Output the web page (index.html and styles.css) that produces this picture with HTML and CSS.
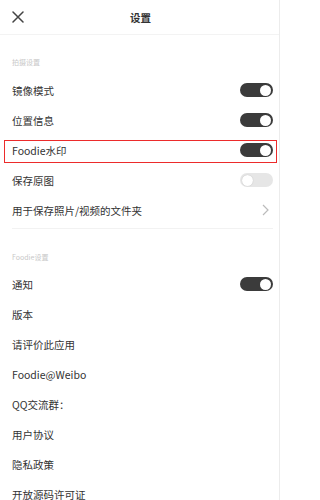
FILE: index.html
```html
<!DOCTYPE html>
<html lang="zh">
<head>
<meta charset="utf-8">
<link rel="stylesheet" href="styles.css">
</head>
<body>
<div class="page">
  <header class="topbar">
    <svg class="close" width="12" height="12" viewBox="0 0 12 12"><path d="M1 1L11 11M11 1L1 11" stroke="#444" stroke-width="1.5" fill="none" stroke-linecap="round"/></svg>
    <div class="title">设置</div>
  </header>

  <div class="section-label first">拍摄设置</div>
  <div class="row"><span>镜像模式</span><span class="toggle on"></span></div>
  <div class="row"><span>位置信息</span><span class="toggle on"></span></div>
  <div class="row marked"><span>Foodie水印</span><span class="toggle on"></span><span class="mark"></span></div>
  <div class="row"><span>保存原图</span><span class="toggle off"></span></div>
  <div class="row"><span>用于保存照片/视频的文件夹</span>
    <svg class="chev" width="7" height="12" viewBox="0 0 7 12"><path d="M1 1L6 6L1 11" stroke="#bbb" stroke-width="1.2" fill="none"/></svg>
  </div>
  <div class="divider"></div>

  <div class="section-label">Foodie设置</div>
  <div class="row"><span>通知</span><span class="toggle on"></span></div>
  <div class="row"><span>版本</span></div>
  <div class="row"><span>请评价此应用</span></div>
  <div class="row"><span>Foodie@Weibo</span></div>
  <div class="row"><span>QQ交流群：</span></div>
  <div class="row"><span>用户协议</span></div>
  <div class="row"><span>隐私政策</span></div>
  <div class="row"><span>开放源码许可证</span></div>
</div>
</body>
</html>
```

FILE: styles.css
```css
html, body {
  margin: 0;
  padding: 0;
  background: #fff;
}
body {
  width: 281px;
  height: 500px;
  overflow: hidden;
  font-family: "Noto Sans CJK SC", "Noto Sans", sans-serif;
  color: #333;
}
.page {
  width: 279px;
  height: 500px;
  border-right: 1px solid #ececec;
  overflow: hidden;
}
.topbar {
  position: relative;
  height: 34px;
  border-bottom: 1px solid #f3f3f3;
  display: flex;
  align-items: center;
  justify-content: center;
}
.close {
  position: absolute;
  left: 12px;
  top: 11px;
}
.title {
  font-size: 10.5px;
  font-weight: 700;
  color: #333;
  margin-left: 2px;
}
.section-label {
  font-size: 7px;
  line-height: 10px;
  color: #c8c8c8;
  padding: 0 12px;
  margin-top: 23px;
  margin-bottom: 7px;
}
.section-label.first {
  margin-top: 22px;
  margin-bottom: 8px;
}
.row {
  position: relative;
  height: 30px;
  padding: 0 6px 0 12px;
  display: flex;
  align-items: center;
  justify-content: space-between;
  font-size: 10.5px;
  color: #333;
}
.toggle {
  position: relative;
  width: 33px;
  height: 14px;
  border-radius: 7px;
  box-sizing: border-box;
}
.toggle::after {
  content: "";
  position: absolute;
  top: 1.5px;
  width: 11px;
  height: 11px;
  border-radius: 50%;
  background: #fff;
}
.toggle.on {
  background: #3b3b3b;
}
.toggle.on::after {
  right: 2px;
}
.toggle.off {
  background: #e6e6e6;
}
.toggle.off::after {
  left: 1.5px;
  box-shadow: 0 0 1px rgba(0,0,0,0.25);
}
.chev {
  margin-right: 4px;
}
.mark {
  position: absolute;
  left: 4px;
  right: 2px;
  top: 5px;
  bottom: 2px;
  border: 1.5px solid #ec2b2b;
}
.divider {
  height: 1px;
  background: #f2f2f2;
  margin: 3px 6px 0 12px;
}
```
